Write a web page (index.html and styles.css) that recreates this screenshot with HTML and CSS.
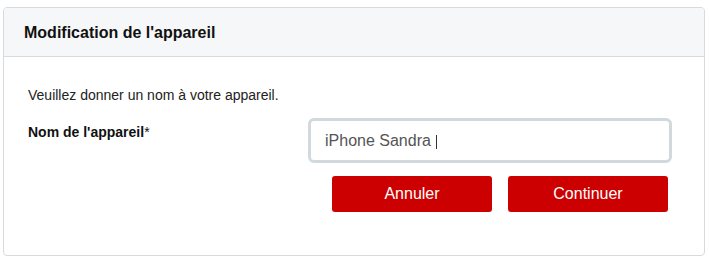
FILE: index.html
```html
<!DOCTYPE html>
<html lang="fr">
<head>
<meta charset="utf-8">
<title>Modification de l'appareil</title>
<link rel="stylesheet" href="styles.css">
</head>
<body>
<section class="card">
  <header class="card-header">
    <h2 class="card-title">Modification de l'appareil</h2>
  </header>
  <div class="card-body">
    <p class="intro">Veuillez donner un nom à votre appareil.</p>
    <div class="field-row">
      <label class="field-label">Nom de l'appareil<span class="req">*</span></label>
      <div class="text-input" role="textbox">iPhone Sandra<span class="caret"></span></div>
    </div>
    <div class="actions">
      <button class="btn">Annuler</button>
      <button class="btn">Continuer</button>
    </div>
  </div>
</section>
</body>
</html>
```
FILE: styles.css
```css
* { box-sizing: border-box; }
html, body { margin: 0; padding: 0; background: #ffffff; }
body {
  font-family: "Liberation Sans", Arial, sans-serif;
  padding: 7px 4px 0 3px;
}
.card {
  width: 702px;
  height: 249px;
  border: 1px solid #dadada;
  border-radius: 4px;
  overflow: hidden;
  background: #fff;
}
.card-header {
  height: 49px;
  background: #f6f7f9;
  border-bottom: 1px solid #dadada;
  display: flex;
  align-items: center;
  padding: 0 0 0 20px;
}
.card-title {
  margin: 0;
  font-size: 16px;
  font-weight: bold;
  color: #111;
  line-height: 18px;
  padding-top: 1px;
}
.card-body {
  padding: 30px 32px 0 24px;
}
.intro {
  margin: 0;
  font-size: 14px;
  line-height: 16px;
  color: #222;
}
.field-row {
  margin-top: 15px;
  display: flex;
  justify-content: space-between;
  align-items: flex-start;
}
.field-label {
  margin-top: 6px;
  font-size: 14px;
  line-height: 16px;
  font-weight: bold;
  color: #111;
}
.req {
  font-weight: normal;
}
.text-input {
  width: 364px;
  height: 45px;
  border: 3px solid #d2d9dc;
  border-radius: 6px;
  padding: 0 14px;
  font-size: 16px;
  color: #555;
  display: flex;
  align-items: center;
  white-space: pre;
}
.caret {
  display: inline-block;
  width: 1px;
  height: 14px;
  background: #333;
  margin-left: 5px;
  margin-top: 2px;
}
.actions {
  margin-top: 13px;
  display: flex;
  justify-content: flex-end;
  gap: 16px;
  padding-right: 4px;
}
.btn {
  width: 160px;
  height: 36px;
  border: 0;
  border-radius: 3px;
  background: #cc0000;
  color: #fff;
  font-family: "Liberation Sans", Arial, sans-serif;
  font-size: 16px;
  padding: 0;
  cursor: pointer;
}
```
